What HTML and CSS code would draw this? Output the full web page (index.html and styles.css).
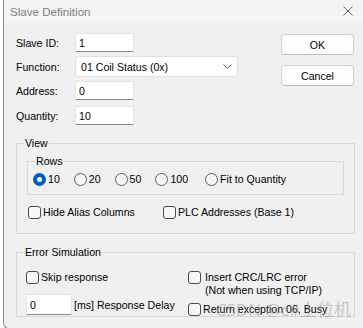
FILE: index.html
```html
<!DOCTYPE html>
<html lang="en">
<head>
  <meta charset="UTF-8" />
  <title>Slave Definition</title>
  <link rel="stylesheet" href="styles.css">
</head>
<body>
  <div class="window">
    <div class="titlebar">
      <span class="title">Slave Definition</span>
      <svg class="close" width="10" height="10" viewBox="0 0 10 10">
        <path d="M0.5 0.5 L9.5 9.5 M9.5 0.5 L0.5 9.5" stroke="#6a6a6a" stroke-width="1" fill="none" />
      </svg>
    </div>

    <div class="content">
      <div class="top">
        <div class="form">
          <div class="row">
            <label>Slave ID:</label>
            <input class="field short" type="text" value="1" />
          </div>
          <div class="row func">
            <label>Function:</label>
            <div class="select">
              <span>01 Coil Status (0x)</span>
              <svg width="9" height="5" viewBox="0 0 9 5">
                <path d="M0.5 0.5 L4.5 4.5 L8.5 0.5" stroke="#606060" stroke-width="1" fill="none" />
              </svg>
            </div>
          </div>
          <div class="row addr">
            <label>Address:</label>
            <input class="field short" type="text" value="0" />
          </div>
          <div class="row">
            <label>Quantity:</label>
            <input class="field short" type="text" value="10" />
          </div>
        </div>

        <div class="buttons">
          <button class="btn">OK</button>
          <button class="btn">Cancel</button>
        </div>
      </div>

      <fieldset class="group view">
        <legend>View</legend>
        <fieldset class="group rows">
          <legend>Rows</legend>
          <div class="radios">
            <label class="opt"><input type="radio" name="rows" checked />10</label>
            <label class="opt"><input type="radio" name="rows" />20</label>
            <label class="opt"><input type="radio" name="rows" />50</label>
            <label class="opt wide"><input type="radio" name="rows" />100</label>
            <label class="opt"><input type="radio" name="rows" />Fit to Quantity</label>
          </div>
        </fieldset>
        <div class="checks">
          <label class="opt"><input type="checkbox" />Hide Alias Columns</label>
          <label class="opt"><input type="checkbox" />PLC Addresses (Base 1)</label>
        </div>
      </fieldset>

      <fieldset class="group errors">
        <legend>Error Simulation</legend>
        <div class="error-grid">
          <div class="col">
            <label class="opt"><input type="checkbox" />Skip response</label>
            <div class="delay">
              <input class="field delay-input" type="text" value="0" />
              <span>[ms] Response Delay</span>
            </div>
          </div>
          <div class="col">
            <label class="opt multi"><input type="checkbox" /><span>Insert CRC/LRC error<br />(Not when using TCP/IP)</span></label>
            <label class="opt busy"><input type="checkbox" />Return exception 06, Busy</label>
          </div>
        </div>
      </fieldset>
    </div>

    <span class="watermark">CSDN @c#上位机</span>
  </div>
</body>
</html>
```

FILE: styles.css
```css
body {
  margin: 0;
  background: #ffffff;
  font-family: 'Liberation Sans', Arial, sans-serif;
  font-size: 10.6px;
  color: #000;
}

.window {
  position: relative;
  margin-left: 3px;
  width: 359px;
  background: #f0f0f0;
  border-left: 1px solid #8c8c8c;
  border-bottom: 1px solid #8c8c8c;
  border-bottom-left-radius: 8px;
  overflow: hidden;
}

.titlebar {
  height: 22px;
  display: flex;
  align-items: center;
  justify-content: space-between;
  padding: 0 10px 0 6px;
  background: #f4f4f4;
}

.title {
  font-size: 11.6px;
  color: #808080;
}

.content {
  padding: 11px 8px 12px 12px;
}

.top {
  display: flex;
  justify-content: space-between;
}

.row {
  display: flex;
  align-items: center;
  height: 19px;
  margin-bottom: 4px;
}

.row.func {
  height: 21px;
}

.row.addr {
  margin-bottom: 6px;
}

.row label {
  width: 59px;
}

.field {
  box-sizing: border-box;
  height: 19px;
  padding: 0 3px;
  background: #fff;
  border: 1px solid #e3e3e3;
  border-bottom-color: #8a8a8a;
  border-radius: 2px 2px 0 0;
  font: inherit;
  color: #000;
  outline: none;
}

.short {
  width: 59px;
}

.select {
  box-sizing: border-box;
  width: 163px;
  height: 21px;
  display: flex;
  align-items: center;
  justify-content: space-between;
  padding: 0 5px 0 5px;
  background: #fff;
  border: 1px solid #e0e0e0;
  border-radius: 3px;
}

.buttons {
  display: flex;
  flex-direction: column;
  gap: 10px;
  margin: 1px 1px 0 0;
}

.btn {
  width: 73px;
  height: 21px;
  padding: 0;
  background: #fdfdfd;
  border: 1px solid #d0d0d0;
  border-bottom-color: #bcbcbc;
  border-radius: 4px;
  font: inherit;
  color: #000;
}

.group {
  margin: 0;
  border: 1px solid #d8d8d8;
  min-width: 0;
}

.group legend {
  padding: 0 1px;
  line-height: 13px;
}

.view {
  margin-top: 8px;
  padding: 5px 7px 14px 7px;
}

.rows {
  margin: 0 3px;
  padding: 5px 5px 8px 5px;
}

.rows legend {
  margin-left: 2px;
}

.radios {
  display: flex;
  gap: 14px;
}

.opt {
  display: flex;
  align-items: center;
  gap: 2px;
  line-height: 13px;
  white-space: nowrap;
}

.opt.wide {
  margin-right: 3px;
}

input[type="radio"],
input[type="checkbox"] {
  appearance: none;
  box-sizing: border-box;
  margin: 0;
  width: 13px;
  height: 13px;
  flex: none;
  background: #f7f7f7;
}

input[type="radio"] {
  border: 1px solid #5c5c5c;
  border-radius: 50%;
}

input[type="radio"]:checked {
  border: 4px solid #005fb8;
  background: #fff;
}

input[type="checkbox"] {
  border: 1px solid #4a4a4a;
  border-radius: 3px;
}

.checks {
  display: grid;
  grid-template-columns: 135px auto;
  margin-top: 11px;
  padding-left: 4px;
}

.errors {
  margin-top: 12px;
  padding: 12px 7px 0 7px;
}

.error-grid {
  display: grid;
  grid-template-columns: 162px auto;
  padding-left: 2px;
}

.delay {
  display: flex;
  align-items: center;
  gap: 2px;
  margin-top: 10px;
}

.delay-input {
  width: 46px;
  height: 21px;
}

.opt.multi {
  align-items: flex-start;
  gap: 4px;
}

.opt.busy {
  margin-top: 6px;
}

.watermark {
  position: absolute;
  right: 12px;
  bottom: 8px;
  font-family: 'Noto Sans', 'Noto Sans CJK SC', sans-serif;
  font-size: 17px;
  color: rgba(140, 140, 140, 0.45);
  pointer-events: none;
}
```
